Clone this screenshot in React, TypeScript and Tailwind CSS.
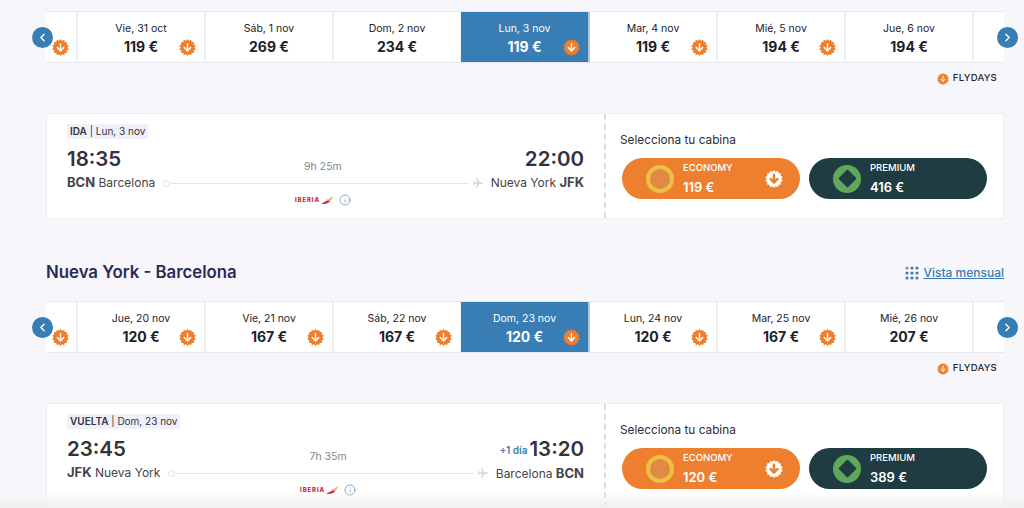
import React from 'react';
import { ChevronLeft, ChevronRight, Info } from 'lucide-react';

interface Day {
    label: string;
    price: string;
    deal?: boolean;
    selected?: boolean;
}

const outbound: Day[] = [
    { label: 'Vie, 31 oct', price: '119 €', deal: true },
    { label: 'Sáb, 1 nov', price: '269 €' },
    { label: 'Dom, 2 nov', price: '234 €' },
    { label: 'Lun, 3 nov', price: '119 €', deal: true, selected: true },
    { label: 'Mar, 4 nov', price: '119 €', deal: true },
    { label: 'Mié, 5 nov', price: '194 €', deal: true },
    { label: 'Jue, 6 nov', price: '194 €' },
];

const inbound: Day[] = [
    { label: 'Jue, 20 nov', price: '120 €', deal: true },
    { label: 'Vie, 21 nov', price: '167 €', deal: true },
    { label: 'Sáb, 22 nov', price: '167 €', deal: true },
    { label: 'Dom, 23 nov', price: '120 €', deal: true, selected: true },
    { label: 'Lun, 24 nov', price: '120 €', deal: true },
    { label: 'Mar, 25 nov', price: '167 €', deal: true },
    { label: 'Mié, 26 nov', price: '207 €' },
];

// 14 point starburst used by the flydays badge
const burst = Array.from({ length: 28 }, (_, i) => {
    const r = i % 2 === 0 ? 12 : 9.8;
    const a = (i * Math.PI) / 14;
    return `${(12 + r * Math.sin(a)).toFixed(2)},${(12 - r * Math.cos(a)).toFixed(2)}`;
}).join(' ');

const DealBadge = ({ size = 17, inverted = false }: { size?: number; inverted?: boolean }) => (
    <svg width={size} height={size} viewBox="0 0 24 24" className="block shrink-0">
        <polygon points={burst} fill={inverted ? '#ffffff' : '#ee7f2f'} />
        <path
            d="M12 6.5v10M7.5 12l4.5 4.8 4.5-4.8"
            fill="none"
            stroke={inverted ? '#ee7f2f' : '#ffffff'}
            strokeWidth={inverted ? 3.4 : 2}
            strokeLinecap="round"
            strokeLinejoin="round"
        />
    </svg>
);

const DayCell = ({ day }: { day: Day }) => (
    <div className={`relative flex shrink-0 flex-col items-center pt-[10px] border-r-2 ${day.selected ? '-ml-px w-[129px] border-[#a9c8e0] bg-[#387db3] text-white' : 'w-[128px] border-[#eeeef5] bg-white text-[#22222a]'}`}>
        <span className="text-[10.5px] leading-[14px] font-normal">{day.label}</span>
        <span className="mt-[2px] text-[14px] leading-[18px] font-bold">{day.price}</span>
        {day.deal && (
            <span className="absolute right-[8px] bottom-[6px]">
                <DealBadge />
            </span>
        )}
    </div>
);

const DateStrip = ({ days }: { days: Day[] }) => (
    <div className="relative h-[52px]">
        <div className="flex h-full border-y border-[#e8e8f1] bg-white">
            <div className="relative w-[32px] shrink-0 border-r-2 border-[#eeeef5]">
                <span className="absolute left-[6px] bottom-[6px]">
                    <DealBadge />
                </span>
            </div>
            {days.map(d => (
                <DayCell key={d.label} day={d} />
            ))}
        </div>
        <button className="absolute left-[-14px] top-[16px] flex h-[21px] w-[21px] items-center justify-center rounded-full bg-[#387db3] text-white">
            <ChevronLeft size={13} strokeWidth={2.5} />
        </button>
        <button className="absolute right-[-14px] top-[16px] flex h-[21px] w-[21px] items-center justify-center rounded-full bg-[#387db3] text-white">
            <ChevronRight size={13} strokeWidth={2.5} />
        </button>
    </div>
);

const Flydays = () => (
    <div className="flex h-[30px] items-center justify-end gap-[4px] pr-[7px] pt-[1px]">
        <DealBadge size={12} />
        <span className="text-[9.6px] font-medium tracking-[0.2px] text-[#26262e]">FLYDAYS</span>
    </div>
);

const IberiaLogo = () => (
    <span className="flex items-center">
        <span className="text-[6px] leading-none font-extrabold tracking-[0.9px] text-[#d3242c]">IBERIA</span>
        <svg width="12" height="8" viewBox="0 0 12 8" className="ml-[1px]">
            <path d="M0 8 L6 4.6 L9.6 4.6 Q8 7.4 3.5 8 Z" fill="#d3242c" />
            <path d="M4.5 4 Q9 3 12 0 Q11.5 2.4 10.2 4 Z" fill="#f5b335" />
        </svg>
    </span>
);

const PlaneGlyph = () => (
    <svg width="10" height="10" viewBox="0 0 24 24" className="ml-[4px] shrink-0">
        <path d="M24 12c0-1.3-1.3-2-2.6-2H15.5L9.5 0H7l3 10H4.5L2 7H0l1.5 5L0 17h2l2.5-3H10L7 24h2.5l6-10h5.9c1.3 0 2.6-.7 2.6-2z" fill="#d6d6da" />
    </svg>
);

interface FlightProps {
    tag: string;
    date: string;
    dep: string;
    arr: string;
    duration: string;
    from: [string, string];
    to: [string, string];
    plusDay?: boolean;
    economy: string;
    premium: string;
}

const FlightCard = ({ tag, date, dep, arr, duration, from, to, plusDay, economy, premium }: FlightProps) => (
    <div className="flex h-[106px] border border-[#ececf3] bg-white">
        <div className="flex w-[559px] shrink-0 flex-col pl-[20px] pr-[20px] pt-[10px] border-r-2 border-dashed border-[#dcdce2]">
            <div className="self-start bg-[#f0f0fa] px-[3px] text-[10px] leading-[15px] text-[#33333b]">
                <span className="font-semibold">{tag}</span> | {date}
            </div>
            <div className="mt-[7px] flex">
                <div className="shrink-0">
                    <div className="text-[20.5px] leading-[26px] font-semibold text-[#33333b]">{dep}</div>
                    <div className="mt-[2px] text-[12px] leading-[16px] text-[#44444c]">
                        <span className="text-[13px] font-bold">{from[0]}</span> {from[1]}
                    </div>
                </div>
                <div className="flex min-w-0 flex-1 flex-col items-center pt-[14px] px-[8px]">
                    <span className="text-[10.5px] leading-[14px] text-[#85858d]">{duration}</span>
                    <div className="mt-[4px] flex w-full items-center">
                        <span className="h-[7px] w-[7px] shrink-0 rounded-full border border-[#e2e2e6]"></span>
                        <span className="h-px flex-1 bg-[#e6e6ea]"></span>
                        <PlaneGlyph />
                    </div>
                    <div className="mt-[6px] flex items-center gap-[6px]">
                        <IberiaLogo />
                        <Info size={12} strokeWidth={1.25} className="text-[#387db3]" />
                    </div>
                </div>
                <div className="shrink-0 text-right">
                    <div className="text-[20.5px] leading-[26px] font-semibold text-[#33333b]">
                        {plusDay && <span className="mr-[2px] align-[2px] text-[10px] font-semibold text-[#387db3]">+1 día</span>}
                        {arr}
                    </div>
                    <div className="mt-[2px] text-[12px] leading-[16px] text-[#44444c]">
                        {to[0]} <span className="text-[13px] font-bold">{to[1]}</span>
                    </div>
                </div>
            </div>
        </div>
        <div className="flex-1 pl-[14px] pt-[19px]">
            <div className="text-[11.8px] leading-[14px] text-[#2c2c34]">Selecciona tu cabina</div>
            <div className="ml-[2px] mt-[11px] flex gap-[9px]">
                <div className="flex h-[41px] w-[178px] items-center rounded-full bg-[#ee7f2f] pl-[24px] pr-[17px] text-white">
                    <span className="h-[28px] w-[28px] shrink-0 rounded-full border-[4px] border-[#ecc044] bg-[#e28a45]"></span>
                    <div className="ml-[9px] flex-1">
                        <div className="text-[9.5px] leading-[12px] font-medium">ECONOMY</div>
                        <div className="mt-[5px] text-[13px] leading-[16px] font-semibold">{economy}</div>
                    </div>
                    <DealBadge size={18} inverted />
                </div>
                <div className="flex h-[41px] w-[178px] items-center rounded-full bg-[#1e3c42] pl-[24px] text-white">
                    <span className="flex h-[28px] w-[28px] shrink-0 items-center justify-center rounded-full bg-[#5fa857]">
                        <span className="h-[13px] w-[13px] rotate-45 rounded-[1px] bg-[#1e3c42]"></span>
                    </span>
                    <div className="ml-[9px]">
                        <div className="text-[9.5px] leading-[12px] font-medium">PREMIUM</div>
                        <div className="mt-[5px] text-[13px] leading-[16px] font-semibold">{premium}</div>
                    </div>
                </div>
            </div>
        </div>
    </div>
);

const App: React.FC = () => (
    <div className="relative h-[508px] w-[1024px] overflow-hidden bg-[#f7f7fb] pl-[46px] pr-[20px] pt-[11px] font-['Inter',sans-serif]">
        <DateStrip days={outbound} />
        <Flydays />
        <div className="mt-[20px]">
            <FlightCard
                tag="IDA"
                date="Lun, 3 nov"
                dep="18:35"
                arr="22:00"
                duration="9h 25m"
                from={['BCN', 'Barcelona']}
                to={['Nueva York', 'JFK']}
                economy="119 €"
                premium="416 €"
            />
        </div>
        <div className="mt-[41px] flex h-[26px] items-center justify-between">
            <h2 className="text-[16.8px] font-semibold text-[#2a2a58]">Nueva York - Barcelona</h2>
            <a className="flex items-center gap-[4px] text-[12px] font-medium text-[#387db3] underline">
                <svg width="14" height="14" viewBox="0 0 14 14" className="shrink-0">
                    {[0, 1, 2].map(r =>
                        [0, 1, 2].map(c => (
                            <circle key={`${r}-${c}`} cx={2 + c * 5} cy={2 + r * 5} r="1.6" fill={r === 0 && c === 0 ? '#5fa857' : '#387db3'} />
                        ))
                    )}
                </svg>
                Vista mensual
            </a>
        </div>
        <div className="mt-[15px]">
            <DateStrip days={inbound} />
        </div>
        <Flydays />
        <div className="mt-[20px]">
            <FlightCard
                tag="VUELTA"
                date="Dom, 23 nov"
                dep="23:45"
                arr="13:20"
                duration="7h 35m"
                from={['JFK', 'Nueva York']}
                to={['Barcelona', 'BCN']}
                plusDay
                economy="120 €"
                premium="389 €"
            />
        </div>
        <div className="pointer-events-none absolute inset-x-0 bottom-0 h-[16px] bg-gradient-to-b from-transparent to-[#f0f0f2]"></div>
    </div>
);

export default App;
